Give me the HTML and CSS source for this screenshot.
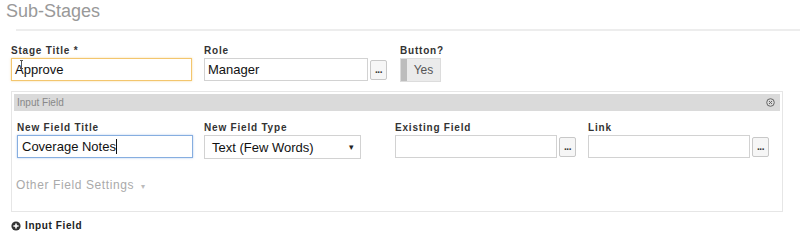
FILE: index.html
```html
<!DOCTYPE html>
<html lang="en">
<head>
  <meta charset="UTF-8">
  <title>Sub-Stages</title>
  <link rel="stylesheet" href="styles.css">
</head>
<body>
  <h2 class="section-title">Sub-Stages</h2>
  <div class="rule"></div>

  <div class="stage-row">
    <div class="field col-title">
      <div class="field-label">Stage Title *</div>
      <div class="text-box focus-warn">
        <span class="ibeam"></span>Approve
      </div>
    </div>
    <div class="field col-role">
      <div class="field-label">Role</div>
      <div class="box-with-btn">
        <div class="text-box role-box">Manager</div>
        <div class="dots-btn">...</div>
      </div>
    </div>
    <div class="field">
      <div class="field-label">Button?</div>
      <div class="toggle">
        <span class="toggle-grip"></span>
        <span class="toggle-text">Yes</span>
      </div>
    </div>
  </div>

  <div class="panel">
    <div class="panel-head">
      <span>Input Field</span>
      <svg class="close-icon" width="9" height="9" viewBox="0 0 9 9">
        <circle cx="4.5" cy="4.5" r="3.8" fill="none" stroke="#666" stroke-width="1"/>
        <path d="M3 3 L6 6 M6 3 L3 6" stroke="#666" stroke-width="1"/>
      </svg>
    </div>
    <div class="panel-row">
      <div class="field col-new-title">
        <div class="field-label">New Field Title</div>
        <div class="text-box focus-blue">Coverage Notes<span class="caret"></span></div>
      </div>
      <div class="field col-type">
        <div class="field-label">New Field Type</div>
        <div class="select-box">
          <span>Text (Few Words)</span>
          <span class="select-arrow">&#9662;</span>
        </div>
      </div>
      <div class="field col-existing">
        <div class="field-label">Existing Field</div>
        <div class="box-with-btn">
          <div class="text-box wide-box"></div>
          <div class="dots-btn">...</div>
        </div>
      </div>
      <div class="field">
        <div class="field-label">Link</div>
        <div class="box-with-btn">
          <div class="text-box wide-box"></div>
          <div class="dots-btn">...</div>
        </div>
      </div>
    </div>
    <div class="more-settings">Other Field Settings <span class="more-arrow">&#9662;</span></div>
  </div>

  <div class="add-link">
    <svg width="10" height="10" viewBox="0 0 10 10">
      <circle cx="5" cy="5" r="4.6" fill="#333"/>
      <path d="M5 2.4 V7.6 M2.4 5 H7.6" stroke="#fff" stroke-width="1.6"/>
    </svg>
    <span>Input Field</span>
  </div>
</body>
</html>
```

FILE: styles.css
```css
body {
  margin: 0;
  font-family: "Liberation Sans", Arial, sans-serif;
  color: #222;
  background: #fff;
}
.section-title {
  margin: 0;
  padding-left: 6px;
  font-size: 18px;
  line-height: 22px;
  font-weight: normal;
  color: #999;
}
.rule {
  margin: 7px 0 0 16px;
  height: 2px;
  background: #ededed;
}
.stage-row {
  display: flex;
  align-items: flex-start;
  margin: 14px 0 0 11px;
}
.field {
  display: flex;
  flex-direction: column;
}
.field-label {
  font-size: 10px;
  line-height: 12px;
  font-weight: bold;
  letter-spacing: 0.8px;
  color: #333;
  margin-bottom: 1px;
}
.col-title {
  width: 181px;
  margin-right: 12px;
}
.col-role {
  margin-right: 13px;
}
.text-box {
  box-sizing: border-box;
  height: 23px;
  border: 1px solid #d2d2d2;
  padding: 0 3px;
  font-size: 13px;
  line-height: 21px;
  color: #111;
  background: #fff;
  position: relative;
}
.focus-warn {
  border-color: #f3c66e;
  box-shadow: 0 0 2px rgba(240, 180, 70, 0.5);
}
.focus-blue {
  border-color: #86aee0;
  box-shadow: 0 0 2px rgba(100, 150, 220, 0.5);
  padding-left: 4px;
}
.ibeam {
  position: absolute;
  left: 8px;
  top: 1px;
  width: 3px;
  height: 9px;
  border-top: 1px solid #555;
  border-bottom: 1px solid #555;
  box-sizing: border-box;
  background: linear-gradient(#555, #555) center / 1px 100% no-repeat;
}
.caret {
  display: inline-block;
  width: 1px;
  height: 15px;
  background: #111;
  vertical-align: -3px;
}
.box-with-btn {
  display: flex;
  align-items: center;
  gap: 2px;
}
.role-box {
  width: 164px;
}
.wide-box {
  width: 162px;
}
.dots-btn {
  box-sizing: border-box;
  width: 17px;
  height: 20px;
  border: 1px solid #c8c8c8;
  border-radius: 2px;
  background: #f6f6f6;
  font-size: 10px;
  line-height: 18px;
  font-weight: bold;
  text-align: center;
  color: #333;
  letter-spacing: -0.5px;
}
.toggle {
  box-sizing: border-box;
  display: flex;
  width: 41px;
  height: 24px;
  border: 1px solid #dcdcdc;
  background: #ebebeb;
}
.toggle-grip {
  width: 6px;
  background: #bdbdbd;
}
.toggle-text {
  flex: 1;
  text-align: center;
  font-size: 12px;
  line-height: 22px;
  color: #555;
}
.panel {
  margin: 9px 17px 0 11px;
  border: 1px solid #e6e6e6;
  padding: 2px 2px 0 2px;
  height: 117px;
}
.panel-head {
  display: flex;
  justify-content: space-between;
  align-items: center;
  height: 17px;
  padding: 0 5px 0 3px;
  background: #dadada;
  font-size: 10px;
  color: #888;
}
.panel-row {
  display: flex;
  align-items: flex-start;
  margin: 11px 0 0 3px;
}
.col-new-title {
  width: 176px;
  margin-right: 11px;
}
.col-type {
  margin-right: 34px;
}
.col-existing {
  margin-right: 12px;
}
.select-box {
  box-sizing: border-box;
  display: flex;
  justify-content: space-between;
  align-items: center;
  width: 157px;
  height: 24px;
  border: 1px solid #d2d2d2;
  padding: 0 6px 0 7px;
  font-size: 13px;
  color: #111;
}
.select-arrow {
  font-size: 9px;
  color: #222;
}
.more-settings {
  margin: 19px 0 0 2px;
  font-size: 12px;
  line-height: 14px;
  letter-spacing: 0.6px;
  color: #aaa;
}
.more-arrow {
  font-size: 8px;
  color: #bbb;
  margin-left: 3px;
}
.add-link {
  display: flex;
  align-items: center;
  gap: 4px;
  margin: 8px 0 0 11px;
  font-size: 10px;
  line-height: 12px;
  font-weight: bold;
  letter-spacing: 0.6px;
  color: #222;
}
```
